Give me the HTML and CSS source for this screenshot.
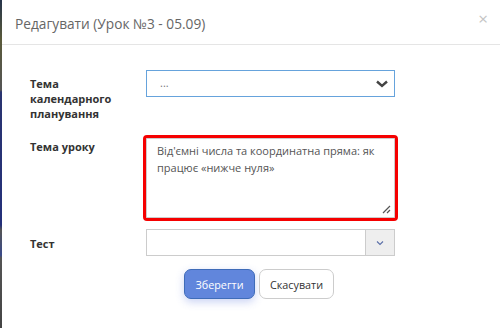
FILE: index.html
```html
<!DOCTYPE html>
<html lang="uk">
<head>
    <meta charset="UTF-8">
    <title>Редагувати урок</title>
    <link rel="stylesheet" href="styles.css">
</head>
<body>
<div class="modal">
    <div class="modal-header">
        <h4 class="modal-title">Редагувати (Урок №3 - 05.09)</h4>
        <span class="close">&times;</span>
    </div>
    <div class="modal-body">
        <div class="form-row row-plan">
            <label class="control-label">Тема календарного планування</label>
            <div class="select select-focus">
                <span class="select-text">...</span>
                <svg class="chevron" width="14" height="10" viewBox="0 0 14 10">
                    <path d="M2 2.5 L7 7 L12 2.5" fill="none" stroke="#444" stroke-width="2.4"/>
                </svg>
            </div>
        </div>
        <div class="form-row row-topic">
            <label class="control-label">Тема уроку</label>
            <div class="textarea">
                Від'ємні числа та координатна пряма: як працює «нижче нуля»
                <svg class="grip" width="9" height="9" viewBox="0 0 9 9">
                    <path d="M8 1 L1 8 M8 5 L5 8" stroke="#555" stroke-width="1.2"/>
                </svg>
            </div>
        </div>
        <div class="form-row row-test">
            <label class="control-label">Тест</label>
            <div class="select select-addon">
                <span class="select-text"></span>
                <span class="addon">
                    <svg width="8" height="6" viewBox="0 0 8 6">
                        <path d="M1 1.5 L4 4.5 L7 1.5" fill="none" stroke="#5a6fa8" stroke-width="1.1"/>
                    </svg>
                </span>
            </div>
        </div>
        <div class="actions">
            <button class="btn btn-primary">Зберегти</button>
            <button class="btn btn-default">Скасувати</button>
        </div>
    </div>
</div>
</body>
</html>
```

FILE: styles.css
```css
html, body {
    margin: 0;
    height: 100%;
}
body {
    background: linear-gradient(to bottom, #26344a 0, #5a5a3a 40px, #555 90px, #2a3470 92px, #24307a 225px, #555 230px, #3a4a8a 255px, #555 258px, #444 100%);
    font-family: "Open Sans", "Noto Sans", sans-serif;
    overflow: hidden;
}
.modal {
    margin-left: 2px;
    height: 100%;
    background: #fff;
}
.modal-header {
    position: relative;
    height: 45px;
    border-bottom: 1px solid #e5e5e5;
    box-sizing: border-box;
    padding: 14px 13px;
}
.modal-title {
    margin: 0;
    font-size: 13.7px;
    font-weight: 400;
    color: #666;
    line-height: 20px;
}
.close {
    position: absolute;
    right: 12px;
    top: 9px;
    font-size: 17px;
    color: #c4c4c4;
    line-height: 20px;
}
.modal-body {
    padding: 25px 0 0 28px;
}
.form-row {
    display: flex;
    align-items: flex-start;
}
.control-label {
    width: 86px;
    margin-right: 30px;
    font-size: 11px;
    font-weight: 700;
    color: #333;
    line-height: 15px;
    padding-top: 7px;
}
.row-plan {
    margin-bottom: 12px;
}
.row-plan .control-label {
    padding-top: 6px;
}
.row-topic .control-label {
    padding-top: 6px;
}
.row-test {
    margin-top: 11px;
}
.select {
    width: 249px;
    height: 27px;
    box-sizing: border-box;
    border: 1px solid #ccc;
    display: flex;
    align-items: center;
    background: #fff;
}
.select-focus {
    border-color: #66a3dc;
    padding: 0 5px 0 13px;
    justify-content: space-between;
}
.select-text {
    font-size: 11px;
    color: #777;
    flex: 1;
}
.select-focus .select-text {
    position: relative;
    top: -1px;
}
.select-addon {
    padding: 0;
}
.addon {
    width: 28px;
    height: 100%;
    background: #eee;
    border-left: 1px solid #ccc;
    display: flex;
    align-items: center;
    justify-content: center;
}
.textarea {
    position: relative;
    width: 249px;
    height: 80px;
    box-sizing: border-box;
    border: 1px solid #ccc;
    outline: 3px solid #f50000;
    border-radius: 1px;
    margin-top: 5px;
    padding: 3px 10px;
    font-size: 11px;
    line-height: 17px;
    color: #555;
}
.grip {
    position: absolute;
    right: 3px;
    bottom: 3px;
}
.actions {
    display: flex;
    gap: 4px;
    margin: 13px 0 0 154px;
}
.btn {
    height: 30px;
    box-sizing: border-box;
    border-radius: 7px;
    font-family: "Open Sans", "Noto Sans", sans-serif;
    font-size: 10.8px;
    padding: 0 6px;
    cursor: pointer;
}
.btn-primary {
    width: 71px;
    background: #6186dc;
    border: 1px solid #3f6cb8;
    color: #fff;
    box-shadow: 0 3px 8px rgba(80, 110, 220, 0.3);
}
.btn-default {
    width: 75px;
    background: #fff;
    border: 1px solid #ccc;
    color: #333;
}
```
